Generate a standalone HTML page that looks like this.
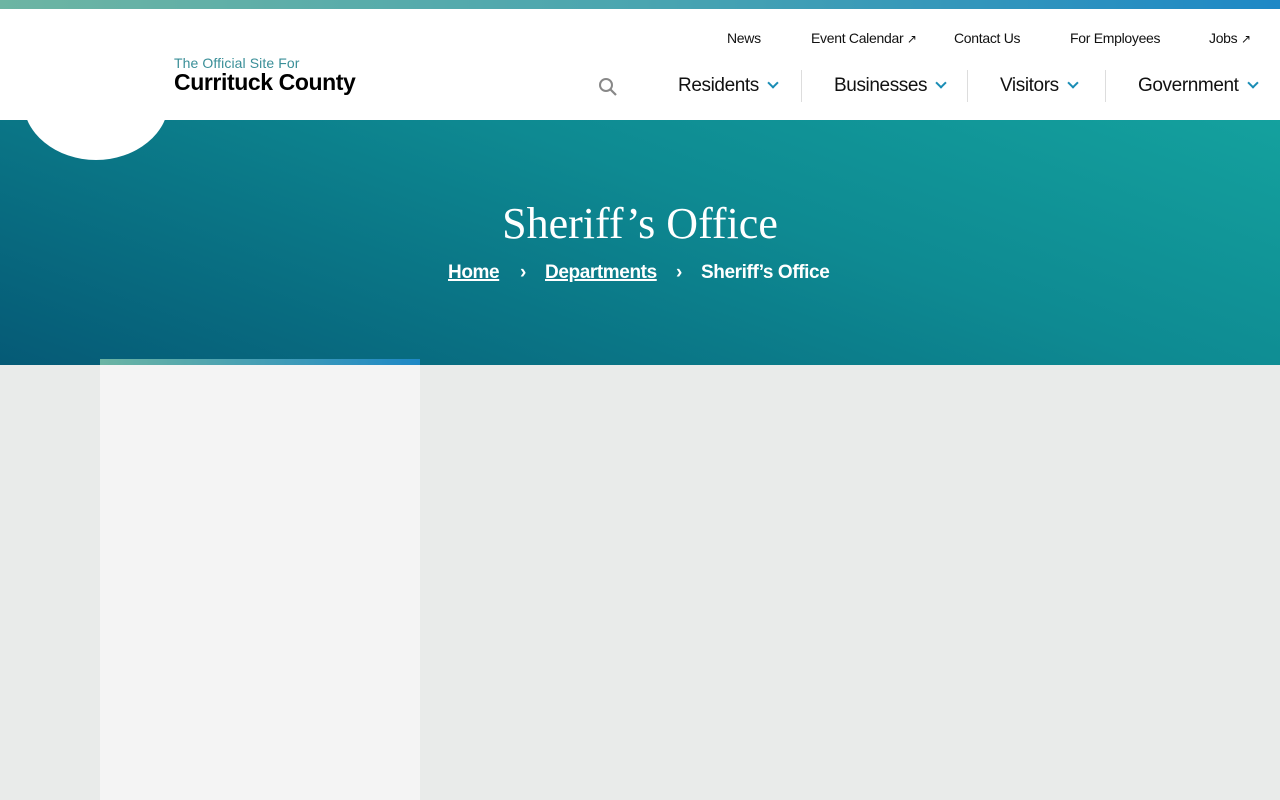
<!DOCTYPE html>
<html><head><meta charset="utf-8"><style>
*{margin:0;padding:0;box-sizing:border-box}
body{width:1280px;height:800px;overflow:hidden;background:#e9ebea;font-family:"Liberation Sans",sans-serif;position:relative}
.top{position:absolute;left:0;top:0;width:1280px;height:9px;background:linear-gradient(90deg,#6db5a3,#4aa5b0 50%,#1e88c6)}
header{position:absolute;top:9px;left:0;width:1280px;height:111px;background:#fff}
.hero{position:absolute;top:120px;left:0;width:1280px;height:245px;background:linear-gradient(200deg,#14a19e 0%,#0e8a92 40%,#055a76 100%)}
.circle{position:absolute;left:23px;top:40px;width:146px;height:120px;border-radius:50%;background:#fff;z-index:2}
.logo1{position:absolute;left:174px;top:55px;font-size:14px;color:#3a8f98;letter-spacing:.1px;z-index:3}
.logo2{position:absolute;left:174px;top:69px;font-size:23px;font-weight:bold;color:#000;z-index:3;letter-spacing:-.4px}
.util{position:absolute;top:30px;font-size:14px;color:#111;letter-spacing:-.3px}
.nav{position:absolute;top:75px;font-size:19px;color:#111;letter-spacing:-.4px}
.chev{display:inline-block;width:8px;height:8px;border-right:2px solid #1a8db5;border-bottom:2px solid #1a8db5;transform:rotate(45deg);margin-left:10px;position:relative;top:-4px}
.sep{position:absolute;top:70px;width:1px;height:32px;background:#ddd}
h1{position:absolute;top:198px;left:0;width:1280px;text-align:center;font-family:"Liberation Serif",serif;font-weight:normal;font-size:44px;color:#fff}
.bc{position:absolute;top:262px;font-size:19px;font-weight:bold;color:#fff;letter-spacing:-.4px}
.bc u{text-decoration-thickness:2px}
.card{position:absolute;left:100px;top:359px;width:320px;height:441px;background:#f4f4f4;border-image:linear-gradient(90deg,#6bb4a3,#1e88c6) 1;border-width:6px 0 0 0;border-style:solid}
</style></head><body>
<div class="top"></div>
<header></header>
<div class="hero"></div>
<div class="circle"></div>
<div class="logo1">The Official Site For</div>
<div class="logo2">Currituck County</div>
<div class="util" style="left:727px">News</div>
<div class="util" style="left:811px">Event Calendar <span style="font-size:12px">&#x2197;</span></div>
<div class="util" style="left:954px">Contact Us</div>
<div class="util" style="left:1070px">For Employees</div>
<div class="util" style="left:1209px">Jobs <span style="font-size:12px">&#x2197;</span></div>
<svg style="position:absolute;left:598px;top:77px" width="20" height="20" viewBox="0 0 20 20"><circle cx="8" cy="8" r="6" fill="none" stroke="#888" stroke-width="2"/><path d="M12.5 12.5L18 18" stroke="#888" stroke-width="2.2"/></svg>
<div class="nav" style="left:678px">Residents<span class="chev"></span></div>
<div class="sep" style="left:801px"></div>
<div class="nav" style="left:834px">Businesses<span class="chev"></span></div>
<div class="sep" style="left:967px"></div>
<div class="nav" style="left:1000px">Visitors<span class="chev"></span></div>
<div class="sep" style="left:1105px"></div>
<div class="nav" style="left:1138px">Government<span class="chev"></span></div>
<h1>Sheriff’s Office</h1>
<div class="bc" style="left:448px"><u>Home</u></div>
<div class="bc" style="left:520px">›</div>
<div class="bc" style="left:545px"><u>Departments</u></div>
<div class="bc" style="left:676px">›</div>
<div class="bc" style="left:701px">Sheriff’s Office</div>
<div class="card"></div>
</body></html>
